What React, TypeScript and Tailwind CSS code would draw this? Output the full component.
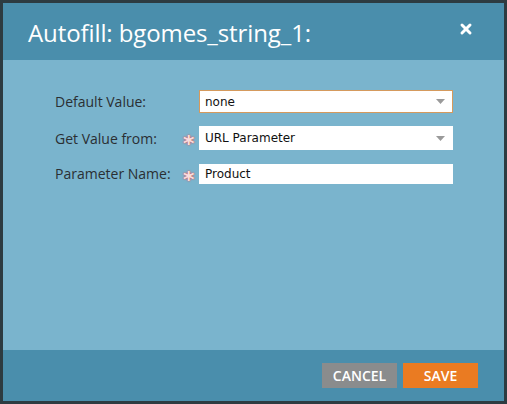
import { X } from "lucide-react";

function Arrow() {
  return (
    <svg width="9" height="5" viewBox="0 0 9 5" className="shrink-0">
      <path d="M0 0h9L4.5 5z" fill="#9a9a9a" />
    </svg>
  );
}

function Star() {
  return (
    <span className="h-[16px] text-[22px] leading-none font-bold text-[#f7dede] [text-shadow:0_0_2px_#d9595f,0_0_1px_#d9595f] font-['DejaVu_Sans',sans-serif] translate-y-[3px] -translate-x-[2px]">
      *
    </span>
  );
}

export default function App() {
  return (
    <div className="w-[507px] h-[404px] bg-[#2d3b41] p-[3px] flex flex-col font-['Open_Sans',sans-serif]">
      <div className="h-[57px] shrink-0 bg-[#4a8eac] flex items-center justify-between pl-[25px] pr-[30px]">
        <h1 className="text-[24px] text-white tracking-[-0.1px] mt-[2px]">Autofill: bgomes_string_1:</h1>
        <X size={16} strokeWidth={4.5} className="text-white mb-[6px]" />
      </div>

      <div className="flex-1 bg-[#7ab4cd] pt-[30px] pl-[52px]">
        <div className="grid grid-cols-[130px_14px_254px] items-center gap-y-[13px] text-[14px] text-[#2a2f33]">
          <span>Default Value:</span>
          <span />
          <div className="h-[23px] bg-white border border-[#d59a5d] flex items-center justify-between pl-[5px] pr-[7px] text-[12px] text-[#111] font-['DejaVu_Sans',sans-serif]">
            <span>none</span>
            <Arrow />
          </div>

          <span>Get Value from:</span>
          <Star />
          <div className="h-[24px] bg-white flex items-center justify-between pl-[6px] pr-[8px] text-[12px] text-[#111] font-['DejaVu_Sans',sans-serif]">
            <span>URL Parameter</span>
            <Arrow />
          </div>

          <span>Parameter Name:</span>
          <Star />
          <div className="h-[20px] bg-white flex items-center pl-[6px] text-[12px] text-[#111] font-['DejaVu_Sans',sans-serif]">
            <span>Product</span>
          </div>
        </div>
      </div>

      <div className="h-[51px] shrink-0 bg-[#4a8eac] flex items-start justify-end gap-[6px] pt-[13px] pr-[26px]">
        <button className="w-[75px] h-[25px] bg-[#8a8c8d] text-white text-[14px] font-semibold">CANCEL</button>
        <button className="w-[75px] h-[25px] bg-[#ea7b22] text-white text-[14px] font-semibold">SAVE</button>
      </div>
    </div>
  );
}
